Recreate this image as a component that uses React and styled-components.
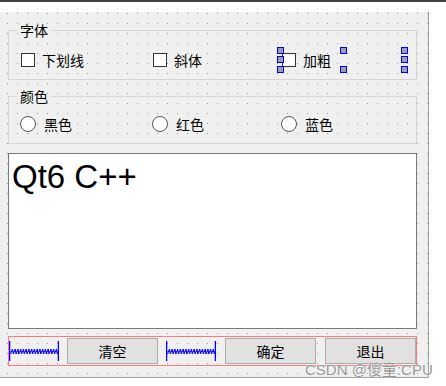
import React from 'react';
import styled, { createGlobalStyle } from 'styled-components';

const Global = createGlobalStyle`
  html, body { margin: 0; padding: 0; background: #fff; }
  body { font-family: "Noto Sans CJK SC", "Liberation Sans", sans-serif; }
  * { box-sizing: border-box; }
`;

const Page = styled.div`
  position: relative;
  width: 446px;
  height: 386px;
  overflow: hidden;
  background: #fff;
  border-top: 2px solid #404040;
  padding-top: 10px;
`;

const Form = styled.div`
  width: 429px;
  height: 366px;
  background-color: #f0f0f0;
  background-image: conic-gradient(from 270deg at 1px 1px, #9a9a9a 0deg 90deg, transparent 90deg 360deg);
  background-size: 10px 10px;
  background-position: 7px 1px;
  border-right: 1px solid #a0a0a0;
  border-bottom: 1px solid #a0a0a0;
  padding: 10px 11px 0 8px;
  display: flex;
  flex-direction: column;
`;

const Group = styled.fieldset`
  width: 409px;
  min-inline-size: 0;
  margin: 0 0 ${(p) => p.$mb}px 0;
  padding: ${(p) => p.$pt}px 11px ${(p) => p.$pb}px 11px;
  border: 1px solid #d6d6d6;
`;

const Legend = styled.legend`
  padding: 0 3px;
  margin-left: -3px;
  font-size: 14px;
  line-height: 16px;
  color: #000;
`;

const Row = styled.div`
  display: grid;
  grid-template-columns: 132px 129px 124px;
  height: 20px;
  align-items: center;
`;

const Item = styled.div`
  position: relative;
  display: flex;
  align-items: center;
  height: 20px;
  gap: ${(p) => p.$gap}px;
  font-size: 14px;
  line-height: 20px;
  color: #000;
`;

const Box = styled.span`
  width: 14px;
  height: 14px;
  margin-left: 1px;
  border: 1px solid #333;
  background: #fff;
  flex: none;
`;

const Circle = styled.span`
  width: 16px;
  height: 16px;
  border-radius: 50%;
  border: 1px solid #555;
  background: #fff;
  flex: none;
`;

const Handle = styled.span`
  position: absolute;
  width: 7px;
  height: 7px;
  border: 1px solid #0000ff;
  background: #a0a0a0;
  ${(p) => (p.$x === 'l' ? 'left: -4px;' : p.$x === 'r' ? 'right: -3px;' : 'left: calc(50% - 3.5px);')}
  ${(p) => (p.$y === 't' ? 'top: -3px;' : p.$y === 'b' ? 'bottom: -3px;' : 'top: calc(50% - 4px);')}
`;

const TextEdit = styled.div`
  width: 409px;
  height: 176px;
  margin: 0 0 7px 0;
  border: 1px solid #7a7a7a;
  background: #fff;
  padding: 4px 3px;
  font-family: "Liberation Sans", Arial, sans-serif;
  font-size: 33px;
  color: #000;
`;

const Bar = styled.div`
  width: 409px;
  height: 30px;
  border: 1px solid #ff7b7b;
  display: flex;
  align-items: center;
`;

const Button = styled.button`
  width: ${(p) => p.$w}px;
  height: 26px;
  flex: none;
  margin-left: ${(p) => p.$ml || 0}px;
  padding: 0;
  background: #e1e1e1;
  border: 1px solid #adadad;
  font-family: "Noto Sans CJK SC", sans-serif;
  font-size: 14px;
  color: #000;
`;

const SpacerSvg = styled.svg`
  flex: none;
  display: block;
  margin-left: ${(p) => p.$ml || 0}px;
`;

const Watermark = styled.div`
  position: absolute;
  left: 305px;
  top: 360px;
  font-family: "Liberation Sans", "Noto Sans CJK SC", sans-serif;
  font-size: 15px;
  line-height: 15px;
  color: rgba(130, 130, 130, 0.85);
  text-shadow: 0 0 1px #fff, 0 0 1px #fff;
  white-space: nowrap;
`;

function Spacer({ ml }) {
  const pts = [];
  for (let x = 1.5; x < 48.5; x += 2.75) {
    pts.push(`${x},13`, `${(x + 2).toFixed(2)},8`);
  }
  return (
    <SpacerSvg $ml={ml} width="50" height="20" viewBox="0 0 50 20">
      <line x1="0.5" y1="0" x2="0.5" y2="20" stroke="#0000ff" strokeWidth="1.5" />
      <line x1="49.5" y1="0" x2="49.5" y2="20" stroke="#0000ff" strokeWidth="1.5" />
      <polyline points={pts.join(' ')} fill="none" stroke="#0000ff" strokeWidth="1" />
      <line x1="1" y1="10.5" x2="49" y2="10.5" stroke="#0000ff" strokeWidth="0.5" />
    </SpacerSvg>
  );
}

function Check({ label, selected }) {
  return (
    <Item $gap={7}>
      <Box />
      {label}
      {selected && (
        <>
          <Handle $x="l" $y="t" />
          <Handle $x="l" $y="m" />
          <Handle $x="l" $y="b" />
          <Handle $x="m" $y="t" />
          <Handle $x="m" $y="b" />
          <Handle $x="r" $y="t" />
          <Handle $x="r" $y="m" />
          <Handle $x="r" $y="b" />
        </>
      )}
    </Item>
  );
}

function Radio({ label }) {
  return (
    <Item $gap={8}>
      <Circle />
      {label}
    </Item>
  );
}

export default function App() {
  return (
    <>
      <Global />
      <Page>
        <Form>
          <Group $pt={12} $pb={9} $mb={8}>
            <Legend>字体</Legend>
            <Row>
              <Check label="下划线" />
              <Check label="斜体" />
              <Check label="加粗" selected />
            </Row>
          </Group>
          <Group $pt={10} $pb={9} $mb={9}>
            <Legend>颜色</Legend>
            <Row>
              <Radio label="黑色" />
              <Radio label="红色" />
              <Radio label="蓝色" />
            </Row>
          </Group>
          <TextEdit>Qt6 C++</TextEdit>
          <Bar>
            <Spacer />
            <Button $w={91} $ml={8}>清空</Button>
            <Spacer ml={8} />
            <Button $w={91} $ml={9}>确定</Button>
            <Button $w={91} $ml={9}>退出</Button>
          </Bar>
        </Form>
        <Watermark>CSDN @傻童:CPU</Watermark>
      </Page>
    </>
  );
}
